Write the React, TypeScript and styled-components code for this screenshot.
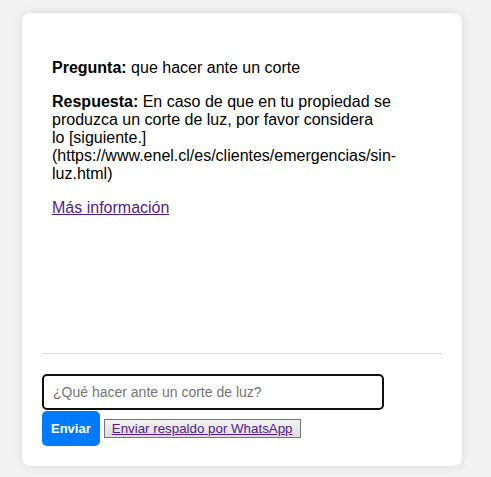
import React from "react";
import styled, { createGlobalStyle } from "styled-components";

const GlobalStyle = createGlobalStyle`
  html, body {
    margin: 0;
    padding: 0;
    background: #f2f2f2;
    font-family: "Liberation Sans", Arial, sans-serif;
  }
  * { box-sizing: border-box; }
`;

const Page = styled.div`
  padding: 13px 0 11px 22px;
`;

const Card = styled.div`
  width: 440px;
  background: #ffffff;
  border-radius: 8px;
  box-shadow: 0 0 10px rgba(0, 0, 0, 0.1);
  padding: 20px;
  display: flex;
  flex-direction: column;
`;

const ChatBox = styled.div`
  height: 321px;
  border-bottom: 1px solid #dddddd;
  overflow: hidden;
`;

const Message = styled.div`
  padding: 10px;
  max-width: 360px;
  font-size: 16px;
  color: #000;
`;

const Paragraph = styled.p`
  margin: 16px 0;
  line-height: 18px;
`;

const InfoLink = styled.a`
  color: #551a8b;
  text-decoration: underline;
`;

const InputArea = styled.div`
  margin-top: 20px;
  display: flex;
  flex-direction: column;
  gap: 1px;
`;

const TextInput = styled.input`
  width: 342px;
  height: 36px;
  padding: 8px 9px;
  border: 2px solid #101010;
  border-radius: 5px;
  font-family: "Liberation Sans", Arial, sans-serif;
  font-size: 14px;
  color: #000;
  outline: none;
  &::placeholder {
    color: #757575;
  }
`;

const ButtonRow = styled.div`
  display: flex;
  align-items: center;
  gap: 4px;
`;

const SendButton = styled.button`
  background: #007bff;
  color: #ffffff;
  border: none;
  border-radius: 5px;
  padding: 10px 9px;
  height: 35px;
  font-family: "Liberation Sans", Arial, sans-serif;
  font-size: 13px;
  font-weight: bold;
  cursor: pointer;
`;

const BackupButton = styled.button`
  background: linear-gradient(#f3f3f3, #dedede);
  border: 1px solid #767676;
  border-radius: 0;
  padding: 1px 7px;
  font-family: "Liberation Sans", Arial, sans-serif;
  font-size: 13.333px;
  color: #551a8b;
  text-decoration: underline;
  cursor: pointer;
`;

export default function App() {
  return (
    <>
      <GlobalStyle />
      <Page>
        <Card>
          <ChatBox>
            <Message>
              <Paragraph>
                <strong>Pregunta:</strong> que hacer ante un corte
              </Paragraph>
              <Paragraph>
                <strong>Respuesta:</strong> En caso de que en tu propiedad se
                produzca un corte de luz, por favor considera{" "}
                lo&nbsp;[siguiente.](https://www.enel.cl/es/clientes/emergencias/sin-luz.html)
              </Paragraph>
              <Paragraph>
                <InfoLink href="#">Más información</InfoLink>
              </Paragraph>
            </Message>
          </ChatBox>
          <InputArea>
            <TextInput placeholder="¿Qué hacer ante un corte de luz?" autoFocus />
            <ButtonRow>
              <SendButton>Enviar</SendButton>
              <BackupButton>Enviar respaldo por WhatsApp</BackupButton>
            </ButtonRow>
          </InputArea>
        </Card>
      </Page>
    </>
  );
}
